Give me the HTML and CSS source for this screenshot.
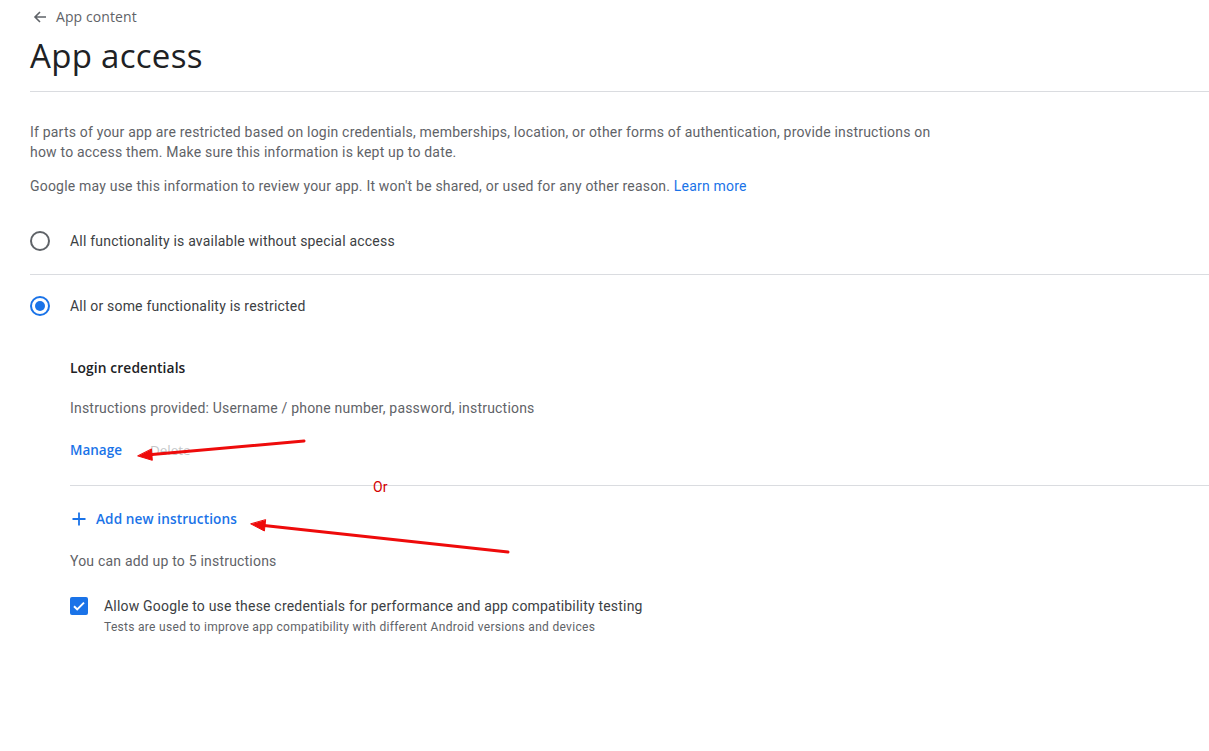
FILE: index.html
```html
<!DOCTYPE html>
<html lang="en">
<head>
<meta charset="utf-8">
<title>App access</title>
<link rel="stylesheet" href="styles.css">
</head>
<body>
<div class="page">
  <header class="header">
    <a class="back">
      <svg class="back-icon" width="16" height="16" viewBox="0 0 16 16"><path d="M14 8H3.5M8 3L3 8l5 5" fill="none" stroke="#5f6368" stroke-width="1.6"/></svg>
      <span>App content</span>
    </a>
    <h1 class="title">App access</h1>
  </header>

  <p class="desc desc-first">If parts of your app are restricted based on login credentials, memberships, location, or other forms of authentication, provide instructions on how to access them. Make sure this information is kept up to date.</p>
  <p class="desc desc-second">Google may use this information to review your app. It won't be shared, or used for any other reason. <a class="link">Learn more</a></p>

  <div class="options">
    <label class="option option-divided">
      <span class="radio"></span>
      <span class="option-text">All functionality is available without special access</span>
    </label>
    <label class="option option-last">
      <span class="radio radio-checked"><span class="radio-dot"></span></span>
      <span class="option-text">All or some functionality is restricted</span>
    </label>
  </div>

  <section class="restricted">
    <div class="cred-title">Login credentials</div>
    <div class="cred-info">Instructions provided: Username / phone number, password, instructions</div>
    <div class="cred-actions">
      <a class="action action-manage">Manage</a>
      <a class="action action-delete">Delete</a>
    </div>
    <div class="divider"></div>
    <a class="add">
      <svg class="add-icon" width="14" height="14" viewBox="0 0 14 14"><path d="M7 0.5v13M0.5 7h13" fill="none" stroke="#1a73e8" stroke-width="1.8"/></svg>
      <span>Add new instructions</span>
    </a>
    <div class="limit">You can add up to 5 instructions</div>
    <div class="consent">
      <span class="checkbox">
        <svg width="18" height="18" viewBox="0 0 18 18"><path d="M4 9.2l3.2 3.2L14 5.6" fill="none" stroke="#fff" stroke-width="2"/></svg>
      </span>
      <div class="consent-text">
        <div class="consent-main">Allow Google to use these credentials for performance and app compatibility testing</div>
        <div class="consent-sub">Tests are used to improve app compatibility with different Android versions and devices</div>
      </div>
    </div>
  </section>
</div>

<div class="annotations">
  <svg class="arrows" width="1209" height="751" viewBox="0 0 1209 751">
    <g stroke="#ee0b0b" stroke-width="3" stroke-linecap="round" fill="#ee0b0b">
      <line x1="304" y1="441" x2="152" y2="454.5"/>
      <polygon stroke-width="1" points="138,456 152.3,460.3 151.5,449.3"/>
      <line x1="508" y1="552" x2="264" y2="525.5"/>
      <polygon stroke-width="1" points="251,524 264.4,531 265.6,520"/>
    </g>
  </svg>
  <span class="or">Or</span>
</div>
</body>
</html>
```

FILE: styles.css
```css
html, body {
  margin: 0;
  padding: 0;
  background: #ffffff;
}

body {
  font-family: Roboto, "Liberation Sans", Arial, sans-serif;
  color: #5f6368;
  font-size: 14px;
  line-height: 20px;
  letter-spacing: 0.2px;
  position: relative;
  width: 1209px;
  height: 751px;
  overflow: hidden;
}

.page {
  padding: 7px 0 0 30px;
}

.header {
  border-bottom: 1px solid #dadce0;
  padding-bottom: 14px;
}

.back {
  display: flex;
  align-items: center;
  gap: 8px;
  font-family: "Open Sans", Roboto, sans-serif;
  font-size: 14px;
  letter-spacing: 0.1px;
  color: #5f6368;
  height: 20px;
  padding-left: 2px;
}

.title {
  margin: 8px 0 0 0;
  font-family: "Open Sans", Roboto, sans-serif;
  font-weight: 400;
  font-size: 33px;
  line-height: 42px;
  color: #202124;
  letter-spacing: 0.3px;
}

.desc {
  margin: 0;
  max-width: 910px;
}

.desc-first {
  margin-top: 30px;
}

.desc-second {
  margin-top: 14px;
}

.link {
  color: #1a73e8;
}

.options {
  margin-top: 12px;
}

.option {
  display: flex;
  align-items: center;
  gap: 20px;
  height: 66px;
}

.option-last {
  height: 61px;
}

.option-divided {
  border-bottom: 1px solid #dadce0;
}

.option-text {
  color: #3c4043;
}

.radio {
  width: 20px;
  height: 20px;
  box-sizing: border-box;
  border: 2px solid #5f6368;
  border-radius: 50%;
  display: flex;
  align-items: center;
  justify-content: center;
}

.radio-checked {
  border-color: #1a73e8;
}

.radio-dot {
  width: 10px;
  height: 10px;
  border-radius: 50%;
  background: #1a73e8;
}

.restricted {
  padding-left: 40px;
  padding-top: 22px;
}

.cred-title {
  font-family: "Open Sans", Roboto, sans-serif;
  font-weight: 600;
  font-size: 13.8px;
  letter-spacing: 0.1px;
  color: #202124;
}

.cred-info {
  margin-top: 20px;
}

.cred-actions {
  margin-top: 22px;
  display: flex;
  gap: 28px;
  font-family: "Open Sans", Roboto, sans-serif;
  font-weight: 600;
  font-size: 13.5px;
  letter-spacing: 0;
}

.action-manage {
  color: #1a73e8;
}

.action-delete {
  color: #c4c7c9;
  font-weight: 500;
}

.divider {
  margin-top: 25px;
  border-top: 1px solid #dadce0;
}

.add {
  margin-top: 23px;
  display: flex;
  align-items: center;
  gap: 10px;
  padding-left: 2px;
  font-family: "Open Sans", Roboto, sans-serif;
  font-weight: 600;
  font-size: 13.6px;
  letter-spacing: 0.1px;
  color: #1a73e8;
}

.limit {
  margin-top: 22px;
}

.consent {
  margin-top: 25px;
  display: flex;
  gap: 16px;
}

.checkbox {
  width: 18px;
  height: 18px;
  margin-top: 1px;
  border-radius: 2px;
  background: #1a73e8;
  display: flex;
  flex: none;
}

.consent-main {
  color: #3c4043;
}

.consent-sub {
  font-size: 12px;
  line-height: 16px;
  letter-spacing: 0.3px;
  margin-top: 3px;
}

.annotations {
  position: absolute;
  left: 0;
  top: 0;
  width: 1209px;
  height: 751px;
  pointer-events: none;
}

.arrows {
  position: absolute;
  left: 0;
  top: 0;
}

.or {
  position: absolute;
  left: 373px;
  top: 479px;
  font-family: Roboto, sans-serif;
  font-size: 14px;
  line-height: 16px;
  color: #d40000;
}
```
